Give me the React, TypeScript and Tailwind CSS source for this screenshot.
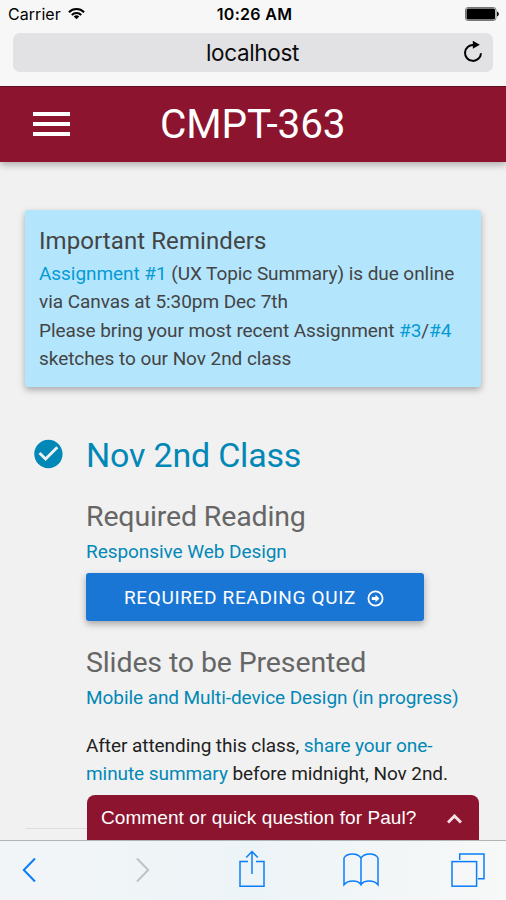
import React from 'react';

const BLUE = '#0b7dfb';

const StatusBar: React.FC = () => (
  <div className="h-[28px] flex items-center justify-between pl-[8px] pr-[7px] text-[16px] font-['Inter','Liberation_Sans',sans-serif] text-black">
    <div className="flex-1 flex items-center gap-[7px]">
      <span className="tracking-[0.05px]">Carrier</span>
      <svg className="-mt-px" width="17" height="13" viewBox="0 0 18 13" fill="none" stroke="#000" strokeWidth="2.2">
        <path d="M1 5.1a11.4 11.4 0 0 1 16 0" />
        <path d="M4 8.1a7.1 7.1 0 0 1 10 0" />
        <path d="M9 12.5 6.1 9.7a4.2 4.2 0 0 1 5.8 0Z" fill="#000" stroke="none" />
      </svg>
    </div>
    <span className="pl-[2px] font-semibold whitespace-nowrap tracking-[0.3px]">10:26 AM</span>
    <div className="flex-1 flex justify-end">
      <svg width="34" height="14" viewBox="0 0 34 14">
        <rect x="0.5" y="0.5" width="30.5" height="13" rx="2.5" fill="none" stroke="#777" />
        <rect x="1.5" y="1.5" width="28.5" height="11" rx="1.5" />
        <path d="M32 4.5c2.4 1 2.4 4 0 5Z" />
      </svg>
    </div>
  </div>
);

const AddressBar: React.FC = () => (
  <div className="h-[58px] pt-[5px] px-[13px]">
    <div className="h-[39px] rounded-[7px] bg-[#e2e2e4] flex items-center pl-[29px] pr-[10px] text-[#0c0c0c]">
      <span className="flex-1 text-center text-[22.5px] font-['Inter','Liberation_Sans',sans-serif] tracking-[-0.35px]">localhost</span>
      <svg className="-mt-[2px]" width="20" height="23" viewBox="0 0 20 23" fill="none" stroke="#000" strokeWidth="2">
        <path d="M10.5 4.9A8 8 0 1 0 18 13.3" />
        <path d="M9.8 0.8v8l7-4Z" fill="#000" stroke="none" />
      </svg>
    </div>
  </div>
);

const Header: React.FC = () => (
  <header className="h-[76px] bg-[#8c142e] border-t border-[#5d1023] flex items-center pb-[2px] pl-[33px] shadow-[0_3px_7px_rgba(0,0,0,0.28)]">
    <button className="w-[37px] mr-[0.5px] flex flex-col gap-[6px]">
      <span className="h-[4px] bg-white" />
      <span className="h-[4px] bg-white" />
      <span className="h-[4px] bg-white" />
    </button>
    <h1 className="flex-1 text-center pr-[71px] text-[40.5px] leading-[48px] text-white whitespace-nowrap tracking-[-0.1px]">CMPT-363</h1>
  </header>
);

const Reminders: React.FC = () => (
  <section className="mx-[25px] mt-[48px] h-[177px] pt-[17px] pl-[14px] rounded-[3px] bg-[#b3e5fc] text-[#444] shadow-[0_3px_7px_rgba(0,0,0,0.3)]">
    <h2 className="text-[24px] leading-[28px] mb-[5px] tracking-[0.08px]">Important Reminders</h2>
    <p className="text-[19px] leading-[28.3px] whitespace-nowrap tracking-[-0.06px]">
      <a className="text-[#039bd5]">Assignment #1</a> (UX Topic Summary) is due online<br />
      via Canvas at 5:30pm Dec 7th<br />
      Please bring your most recent Assignment <a className="text-[#039bd5]">#3</a>/<a className="text-[#039bd5]">#4</a><br />
      sketches to our Nov 2nd class
    </p>
  </section>
);

const ClassEntry: React.FC = () => (
  <section className="mt-[48px] flex pl-[31px] whitespace-nowrap">
    <svg className="mt-[2px] mr-[21px] shrink-0" width="34" height="34" viewBox="-0.3 0 24 24" fill="#0288b7">
      <path d="M12 2C6.48 2 2 6.48 2 12s4.48 10 10 10 10-4.48 10-10S17.52 2 12 2zm-2 15l-5-5 1.41-1.41L10 14.17l7.59-7.59L19 8l-9 9z" />
    </svg>
    <div>
      <h2 className="text-[34px] leading-[40px] text-[#0288b7] tracking-[-0.2px]">Nov 2nd Class</h2>
      <h3 className="mt-[25px] text-[28.5px] leading-[34px] text-[#666] tracking-[-0.15px]">Required Reading</h3>
      <a className="block mt-[4px] text-[19px] leading-[28px] text-[#0288b7] tracking-[-0.06px]">Responsive Web Design</a>
      <button className="mt-[7px] w-[338px] h-[48px] rounded-[3px] bg-[#1976d4] text-white flex items-center justify-center gap-[11px] pt-[2px] pr-[2px] shadow-[0_3px_7px_rgba(0,0,0,0.32)]">
        <span className="text-[19px] tracking-[0.65px]">REQUIRED READING QUIZ</span>
        <svg className="mt-px" width="17" height="17" viewBox="0 0 17 17" fill="none" stroke="#fff" strokeWidth="1.8">
          <circle cx="8.5" cy="8.5" r="7.1" />
          <path d="M4.8 7.1h3.7V4.7l4 3.8-4 3.8V9.9H4.8Z" fill="#fff" stroke="none" />
        </svg>
      </button>
      <h3 className="mt-[25px] text-[28.5px] leading-[34px] text-[#666] tracking-[-0.12px]">Slides to be Presented</h3>
      <a className="block mt-[4px] text-[19px] leading-[28px] text-[#0288b7] tracking-[-0.07px]">Mobile and Multi-device Design (in progress)</a>
      <p className="mt-[20px] text-[19px] leading-[28.3px] text-[#212121] tracking-[-0.07px]">
        After attending this class, <a className="text-[#0288b7]">share your one-</a><br />
        <a className="text-[#0288b7]">minute summary</a> before midnight, Nov 2nd.
      </p>
    </div>
  </section>
);

const CommentTab: React.FC = () => (
  <div className="absolute left-[87px] bottom-0 w-[392px] h-[45px] rounded-t-[8px] bg-[#8c142e] text-white flex items-center justify-between pt-[2px] pl-[14px] pr-[17px] font-['Liberation_Sans',Arial,sans-serif]">
    <span className="text-[19px] whitespace-nowrap tracking-[0.08px]">Comment or quick question for Paul?</span>
    <svg width="15" height="10" viewBox="0 0 15 10" fill="none" stroke="#f3dfe4" strokeWidth="3">
      <path d="M1 8.5 7.5 2 14 8.5" />
    </svg>
  </div>
);

const Toolbar: React.FC = () => (
  <nav className="h-[60px] border-t border-[#b2b4b6] bg-linear-to-r from-[#f2f5f7] via-[#edf4f7] to-[#f7f8f8] flex items-center pl-[22px]">
    <svg className="-mt-px" width="14" height="26" viewBox="0 0 14 26" fill="none" stroke={BLUE} strokeWidth="2">
      <path d="M13 1.5 1.8 13 13 24.5" />
    </svg>
    <svg className="ml-[100px] -mt-px" width="14" height="26" viewBox="0 0 14 26" fill="none" stroke="#bfc3c6" strokeWidth="2">
      <path d="M1 1.5 12.2 13 1 24.5" />
    </svg>
    <svg className="ml-[89px] -mt-[5px]" width="26" height="37" viewBox="0 0 26 37" fill="none" stroke={BLUE} strokeWidth="1.5">
      <path d="M9 11.5H1v24.7h24V11.5h-8" />
      <path d="M13 24V1.5M7.2 7.5 13 1.5l5.8 6" />
    </svg>
    <svg className="ml-[78px] -mt-px" width="36" height="34" viewBox="0 0 36 34" fill="none" stroke={BLUE} strokeWidth="1.5">
      <path d="M18 5C14.5-.3 4-.3 1 5v26.7c4-5 14-5 17 0 3-5 13-5 17 0V5c-3-5.3-13.5-5.3-17 0v27.5" />
    </svg>
    <svg className="ml-[72px] -mt-[2px]" width="34" height="34" viewBox="0 0 34 34" fill="none" stroke={BLUE} strokeWidth="1.5">
      <rect x="1" y="8.6" width="24.6" height="24.6" />
      <path d="M8.7 7V1H33v24.8h-6" />
    </svg>
  </nav>
);

export default function App() {
  return (
    <div className="w-[506px] h-[900px] overflow-hidden flex flex-col bg-[#f7f7f7] font-['Roboto',sans-serif]">
      <StatusBar />
      <AddressBar />
      <main className="relative flex-1 overflow-hidden bg-[#f1f1f1]">
        <Header />
        <Reminders />
        <ClassEntry />
        <hr className="mx-[26px] mt-[39px] border-[#dedede]" />
        <CommentTab />
      </main>
      <Toolbar />
    </div>
  );
}
